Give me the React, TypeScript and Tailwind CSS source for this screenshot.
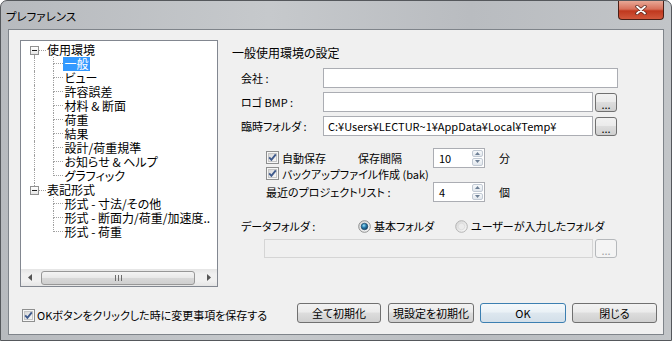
import clsx from "clsx"

const dot = "border-dotted border-[#a0a0a0]"

function CheckBox() {
  return (
    <svg width="13" height="13" viewBox="0 0 13 13" className="shrink-0">
      <defs>
        <linearGradient id="cbin" x1="0" y1="0" x2="1" y2="1">
          <stop offset="0" stopColor="#d6d6d6" />
          <stop offset="1" stopColor="#fafafa" />
        </linearGradient>
      </defs>
      <rect x="0.5" y="0.5" width="12" height="12" fill="#f6f6f6" stroke="#8e8f8f" />
      <rect x="2.5" y="2.5" width="8" height="8" fill="url(#cbin)" stroke="#c6c6c6" />
      <path d="M3.2 6.4 L5.4 8.8 L9.8 3.4" fill="none" stroke="#3f5a8c" strokeWidth="1.9" />
    </svg>
  )
}

function Radio({ on }: { on?: boolean }) {
  return (
    <svg width="13" height="13" viewBox="0 0 13 13" className="shrink-0">
      <defs>
        <radialGradient id="rdot" cx="0.4" cy="0.35" r="0.7">
          <stop offset="0" stopColor="#9fe3f8" />
          <stop offset="0.45" stopColor="#2a7fb0" />
          <stop offset="1" stopColor="#0d3a5e" />
        </radialGradient>
        <linearGradient id="rin" x1="0" y1="0" x2="1" y2="1">
          <stop offset="0" stopColor="#d4d4d4" />
          <stop offset="1" stopColor="#fbfbfb" />
        </linearGradient>
      </defs>
      <circle cx="6.5" cy="6.5" r="5.8" fill="url(#rin)" stroke={on ? "#8e8f8f" : "#b4b4b4"} />
      {on && <circle cx="6.5" cy="6.5" r="3.3" fill="url(#rdot)" stroke="#16405f" strokeWidth="0.6" />}
      {!on && <circle cx="6.5" cy="6.5" r="3.3" fill="#ececec" stroke="#d6d6d6" strokeWidth="0.6" />}
    </svg>
  )
}

function DotsButton({ disabled }: { disabled?: boolean }) {
  return (
    <div
      className={clsx(
        "ml-[2px] flex h-[19px] w-[22px] items-end justify-center rounded-[3px] border pb-[1px] text-[11px] leading-[11px]",
        disabled
          ? "border-[#b5b8bb] bg-[#f4f4f4] text-[#a0a0a0]"
          : "border-[#707070] bg-[linear-gradient(#f2f2f2,#ebebeb_45%,#dddddd_50%,#cfcfcf)] text-black"
      )}>
      ...
    </div>
  )
}

function Arrow({ up }: { up?: boolean }) {
  return (
    <div className="flex flex-1 items-center justify-center rounded-[2px] border border-[#c2cad4] bg-[linear-gradient(#f7f9fb,#e2e7ed)]">
      <svg width="5" height="3" viewBox="0 0 5 3">
        <path d={up ? "M0 3 L2.5 0 L5 3Z" : "M0 0 L2.5 3 L5 0Z"} fill="#6d7f95" />
      </svg>
    </div>
  )
}

function Spin({ value }: { value: string }) {
  return (
    <div className="flex h-[20px] w-[52px] border border-[#abadb3] bg-white">
      <span className="flex-1 pl-[5px] leading-[18px]">{value}</span>
      <div className="flex w-[13px] flex-col gap-px p-px">
        <Arrow up />
        <Arrow />
      </div>
    </div>
  )
}

function Btn({ label, className, def }: { label: string; className: string; def?: boolean }) {
  return (
    <div
      className={clsx(
        "flex h-[20px] items-center justify-center rounded-[3px] border leading-[14px]",
        def
          ? "border-[#3c7fb1] bg-[linear-gradient(#f4f8fb,#eaf1f6_45%,#dde7ef_50%,#d3dfe9)]"
          : "border-[#707070] bg-[linear-gradient(#f2f2f2,#ebebeb_45%,#dddddd_50%,#cfcfcf)]",
        className
      )}>
      {label}
    </div>
  )
}

function RootRow({ label, first, last }: { label: string; first?: boolean; last?: boolean }) {
  return (
    <div className="flex h-[14px] items-center">
      <div className="ml-[9px] flex h-full w-[9px] flex-col">
        <div className={clsx("flex-1", !first && `ml-[4px] border-l ${dot}`)} />
        <div className="flex h-[9px] w-[9px] items-center justify-center border border-[#919191] bg-[linear-gradient(#ffffff,#e6e6e6)]">
          <div className="h-px w-[5px] bg-[#1e1e1e]" />
        </div>
        <div className={clsx("flex-1", !last && `ml-[4px] border-l ${dot}`)} />
      </div>
      <div className={`w-[7px] border-t ${dot}`} />
      <span className="ml-[1px]">{label}</span>
    </div>
  )
}

function ChildRow({ label, last, rootLine, selected }: { label: string; last?: boolean; rootLine?: boolean; selected?: boolean }) {
  return (
    <div className="flex h-[14px]">
      <div className="w-[13px] shrink-0" />
      <div className={clsx("w-[19px] shrink-0", rootLine && `border-l ${dot}`)} />
      <div className="flex w-[10px] shrink-0 flex-col">
        <div className={`h-[7px] border-b border-l ${dot}`} />
        <div className={clsx("flex-1", !last && `border-l ${dot}`)} />
      </div>
      <span
        className={clsx(
          "h-[14px] px-[1.5px] leading-[14px]",
          selected && "bg-[#3399ff] text-white"
        )}>
        {label}
      </span>
    </div>
  )
}

const group1 = ["一般", "ビュー", "許容誤差", "材料 & 断面", "荷重", "結果", "設計/荷重規準", "お知らせ & ヘルプ", "グラフィック"]
const group2 = ["形式 - 寸法/その他", "形式 - 断面力/荷重/加速度..", "形式 - 荷重"]

function Tree() {
  return (
    <div className="flex h-[247px] w-[198px] shrink-0 flex-col border border-[#828790] bg-white text-[12px]">
      <div className="flex-1 overflow-hidden whitespace-nowrap pt-[2px]">
        <RootRow label="使用環境" first />
        {group1.map((t, i) => (
          <ChildRow key={t} label={t} rootLine selected={i === 0} last={i === group1.length - 1} />
        ))}
        <RootRow label="表記形式" last />
        {group2.map((t, i) => (
          <ChildRow key={t} label={t} last={i === group2.length - 1} />
        ))}
      </div>
      <div className="flex h-[17px] items-center bg-[linear-gradient(#e5e5e5,#f0f0f0_30%,#f0f0f0_70%,#e5e5e5)]">
        <div className="flex w-[17px] justify-center">
          <svg width="4" height="7" viewBox="0 0 4 7">
            <path d="M4 0 L0 3.5 L4 7Z" fill="#555" />
          </svg>
        </div>
        <div className="ml-[3px] flex h-[14px] w-[154px] items-center justify-center rounded-[3px] border border-[#979797] bg-[linear-gradient(#f4f4f4,#e8e8e8_50%,#d8d8d8_51%,#cfcfcf)]">
          <svg width="7" height="6" viewBox="0 0 7 6">
            <path d="M0.5 0 V6 M3.5 0 V6 M6.5 0 V6" stroke="#6c6c6c" />
          </svg>
        </div>
        <div className="flex-1" />
        <div className="flex w-[17px] justify-center">
          <svg width="4" height="7" viewBox="0 0 4 7">
            <path d="M0 0 L4 3.5 L0 7Z" fill="#555" />
          </svg>
        </div>
      </div>
    </div>
  )
}

function Field({ label, value, dots }: { label: string; value?: string; dots?: boolean }) {
  return (
    <div className="flex h-[20px] items-center">
      <div className="w-[93px] pl-[11px]">{label}</div>
      <div
        className={clsx(
          "h-[20px] overflow-hidden whitespace-nowrap border border-[#abadb3] bg-white pl-[4px] leading-[18px]",
          dots ? "w-[270px]" : "w-[295px]"
        )}>
        {value}
      </div>
      {dots && <DotsButton />}
    </div>
  )
}

function SettingsPanel() {
  return (
    <div className="ml-[12px] mt-[10px] flex w-[388px] flex-col">
      <div className="mt-[6px] h-[14px] pl-[2px] text-[12px]">一般使用環境の設定</div>
      <div className="mt-[8px] flex flex-col gap-[4px]">
        <Field label="会社 :" />
        <Field label="ロゴ BMP :" dots />
        <Field label="臨時フォルダ :" value="C:¥Users¥LECTUR~1¥AppData¥Local¥Temp¥" dots />
      </div>

      <div className="mt-[12px] flex h-[19px] items-center pl-[36px]">
        <div className="flex w-[92px] items-center gap-[3px]">
          <CheckBox />
          <span>自動保存</span>
        </div>
        <div className="w-[75px]">保存間隔</div>
        <Spin value="10" />
        <span className="ml-[14px]">分</span>
      </div>
      <div className="flex h-[13px] items-center gap-[3px] pl-[36px]">
        <CheckBox />
        <span>バックアップファイル作成 (bak)</span>
      </div>
      <div className="mt-[2px] flex h-[20px] items-center pl-[36px]">
        <div className="w-[167px]">最近のプロジェクトリスト :</div>
        <Spin value="4" />
        <span className="ml-[14px]">個</span>
      </div>

      <div className="mt-[16px] flex h-[16px] items-center pl-[11px]">
        <div className="w-[117px]">データフォルダ :</div>
        <div className="flex w-[97px] items-center gap-[3px]">
          <Radio on />
          <span>基本フォルダ</span>
        </div>
        <div className="flex items-center gap-[3px]">
          <Radio />
          <span>ユーザーが入力したフォルダ</span>
        </div>
      </div>
      <div className="mt-[5px] flex h-[19px] items-center pl-[34px]">
        <div className="h-[19px] w-[329px] border border-[#d5d5d5] bg-[#f0f0f0]" />
        <DotsButton disabled />
      </div>
    </div>
  )
}

export default function App() {
  return (
    <div className="flex h-[341px] w-[672px] flex-col overflow-hidden rounded-t-[7px] border border-[#55585c] bg-[linear-gradient(90deg,#b7babe,#c6c9cc_40%,#b9bcc0_70%,#c2c5c8)] font-['Noto_Sans_CJK_JP',sans-serif] text-[11px] leading-[14px] text-black [font-feature-settings:'palt']">
      <div className="flex h-[28px] shrink-0 items-start justify-between">
        <div className="pl-[5px] pt-[8px] text-[11.5px] leading-[14px]">プレファレンス</div>
        <div className="mr-[7px] flex h-[19px] w-[46px] items-center justify-center rounded-b-[4px] border border-t-0 border-[#4a1f16] bg-[linear-gradient(#e8a896,#d7705a_45%,#c0381e_55%,#d1583c)]">
          <svg width="12" height="10" viewBox="0 0 12 10">
            <path d="M2 1.5 L10 8.5 M10 1.5 L2 8.5" stroke="#5a2a20" strokeWidth="3.4" strokeLinecap="round" />
            <path d="M2 1.5 L10 8.5 M10 1.5 L2 8.5" stroke="#ffffff" strokeWidth="1.8" strokeLinecap="round" />
          </svg>
        </div>
      </div>

      <div className="mx-[7px] flex h-[306px] shrink-0 flex-col border border-[#7f848a] bg-[#f0f0f0]">
        <div className="flex h-[257px]">
          <div className="ml-[11px] mt-[10px]">
            <Tree />
          </div>
          <SettingsPanel />
        </div>

        <div className="mt-[16px] flex h-[20px] items-start">
          <div className="flex items-center gap-[2px] pl-[13px] pt-[5px]">
            <CheckBox />
            <span>OKボタンをクリックした時に変更事項を保存する</span>
          </div>
          <div className="flex-1" />
          <div className="mr-[6px] flex gap-[6px]">
            <Btn label="全て初期化" className="mr-px w-[84px]" />
            <Btn label="現設定を初期化" className="w-[86px]" />
            <Btn label="OK" className="w-[86px]" def />
            <Btn label="閉じる" className="w-[85px]" />
          </div>
        </div>
      </div>
    </div>
  )
}
